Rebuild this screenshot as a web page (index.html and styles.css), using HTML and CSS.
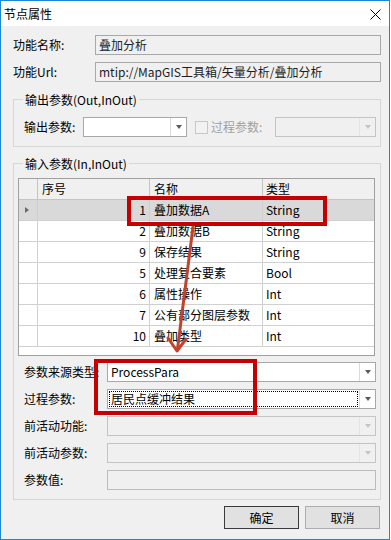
FILE: index.html
```html
<!DOCTYPE html>
<html lang="zh-CN">
<head>
<meta charset="utf-8">
<title>节点属性</title>
<link rel="stylesheet" href="styles.css">
</head>
<body>
<div class="window">
  <div class="titlebar">
    <span class="title">节点属性</span>
    <svg class="close" width="11" height="11" viewBox="0 0 11 11"><path d="M0.5 0.5 L10.5 10.5 M10.5 0.5 L0.5 10.5" stroke="#000" stroke-width="1" fill="none"/></svg>
  </div>
  <div class="content">
    <div class="info">
      <div class="lbl">功能名称:</div>
      <div class="textbox">叠加分析</div>
      <div class="lbl">功能Url:</div>
      <div class="textbox">mtip://MapGIS工具箱/矢量分析/叠加分析</div>
    </div>

    <div class="group g1">
      <div class="group-head"><span>输出参数(Out,InOut)</span></div>
      <div class="group-body">
        <div class="out-row">
          <div class="lbl out-lbl">输出参数:</div>
          <div class="combo small"><div class="val"></div><div class="dd"><i class="tri"></i></div></div>
          <div class="check"></div>
          <div class="lbl dis-lbl">过程参数:</div>
          <div class="combo small2 disabled"><div class="val"></div><div class="dd"><i class="tri"></i></div></div>
        </div>
      </div>
    </div>

    <div class="group g2">
      <div class="group-head"><span>输入参数(In,InOut)</span></div>
      <div class="group-body">
        <div class="grid">
          <div class="row head"><div></div><div class="c-l">序号</div><div class="c-l">名称</div><div class="c-l">类型</div></div>
          <div class="row sel"><div class="rh"><i class="cur"></i></div><div class="num">1</div><div class="c-l">叠加数据A</div><div class="c-l">String</div></div>
          <div class="row"><div class="rh"></div><div class="num">2</div><div class="c-l">叠加数据B</div><div class="c-l">String</div></div>
          <div class="row"><div class="rh"></div><div class="num">9</div><div class="c-l">保存结果</div><div class="c-l">String</div></div>
          <div class="row"><div class="rh"></div><div class="num">5</div><div class="c-l">处理复合要素</div><div class="c-l">Bool</div></div>
          <div class="row"><div class="rh"></div><div class="num">6</div><div class="c-l">属性操作</div><div class="c-l">Int</div></div>
          <div class="row"><div class="rh"></div><div class="num">7</div><div class="c-l">公有部分图层参数</div><div class="c-l">Int</div></div>
          <div class="row"><div class="rh"></div><div class="num">10</div><div class="c-l">叠加类型</div><div class="c-l">Int</div></div>
        </div>
        <div class="params">
          <div class="prow"><div class="lbl plbl">参数来源类型:</div><div class="combo"><div class="val">ProcessPara</div><div class="dd"><i class="tri"></i></div></div></div>
          <div class="prow"><div class="lbl plbl">过程参数:</div><div class="combo"><div class="val focus"><span>居民点缓冲结果</span></div><div class="dd"><i class="tri"></i></div></div></div>
          <div class="prow"><div class="lbl plbl">前活动功能:</div><div class="combo disabled"><div class="val"></div><div class="dd"><i class="tri"></i></div></div></div>
          <div class="prow"><div class="lbl plbl">前活动参数:</div><div class="combo disabled"><div class="val"></div><div class="dd"><i class="tri"></i></div></div></div>
          <div class="prow"><div class="lbl plbl">参数值:</div><div class="textbox dis-box"></div></div>
        </div>
      </div>
    </div>

    <div class="buttons">
      <div class="btn default">确定</div>
      <div class="btn">取消</div>
    </div>
  </div>

  <div class="mark mark1"></div>
  <div class="mark mark2"></div>
  <svg class="arrow" width="390" height="540" viewBox="0 0 390 540">
    <path d="M193 227 L177.5 349" stroke="#c0432f" stroke-width="3" fill="none" stroke-linecap="round"/>
    <path d="M168 338 L177 351 L186 339" stroke="#c0432f" stroke-width="3" fill="none" stroke-linecap="round" stroke-linejoin="round"/>
  </svg>
</div>
</body>
</html>
```

FILE: styles.css
```css
* { box-sizing: border-box; }
html, body { margin: 0; padding: 0; background: #fff; }
body {
  font-family: "Noto Sans CJK SC", "Microsoft YaHei", sans-serif;
  font-size: 12px;
  color: #000;
}
.window {
  position: relative;
  width: 390px;
  height: 540px;
  border: 1px solid #1c86d8;
  background: #f0f0f0;
}
.titlebar {
  height: 25px;
  background: #fff;
  display: flex;
  align-items: center;
  justify-content: space-between;
  padding: 0 8px 0 3px;
}
.title { line-height: 16px; }
.close { display: block; margin-top: 2px; }

.content { padding: 9px 8px 0 12px; }

.info {
  display: grid;
  grid-template-columns: 82px 1fr;
  grid-auto-rows: 20px;
  row-gap: 7px;
}
.lbl {
  display: flex;
  align-items: center;
  line-height: 16px;
  white-space: nowrap;
}
.textbox {
  border: 1px solid #a8a8a8;
  background: #f0f0f0;
  display: flex;
  align-items: center;
  padding-left: 3px;
  line-height: 16px;
  color: #1e1e1e;
  white-space: nowrap;
}

.group-head { display: flex; height: 16px; line-height: 16px; }
.group-head::before {
  content: "";
  width: 9px;
  height: 8px;
  align-self: flex-end;
  border-left: 1px solid #d6d6d6;
  border-top: 1px solid #d6d6d6;
}
.group-head::after {
  content: "";
  flex: 1;
  height: 8px;
  align-self: flex-end;
  border-right: 1px solid #d6d6d6;
  border-top: 1px solid #d6d6d6;
}
.group-head span { padding: 0 2px; }
.group-body { border: 1px solid #d6d6d6; border-top: none; }

.g1 { margin-top: 10px; }
.g1 .group-body { padding: 9px 0 9px 10px; }
.out-row { display: flex; align-items: center; height: 20px; }
.out-lbl { width: 59px; }
.combo {
  display: flex;
  height: 20px;
  border: 1px solid #a8a8a8;
  background: #fff;
  flex: 1;
}
.combo.small { flex: none; width: 104px; }
.combo.small2 { flex: none; width: 101px; }
.combo .val {
  flex: 1;
  display: flex;
  align-items: center;
  padding-left: 3px;
  line-height: 16px;
  white-space: nowrap;
}
.combo .dd {
  width: 16px;
  border-left: 1px solid #dadada;
  display: flex;
  align-items: center;
  justify-content: center;
}
.tri {
  display: block;
  width: 0;
  height: 0;
  border-left: 3.5px solid transparent;
  border-right: 3.5px solid transparent;
  border-top: 4px solid #5a5a5a;
  margin-left: 1px;
}
.combo.disabled { background: #f0f0f0; border-color: #c4c4c4; }
.combo.disabled .dd { border-left-color: #e4e4e4; }
.combo.disabled .tri { border-top-color: #c4c4c4; }
.check {
  width: 13px;
  height: 13px;
  margin-left: 8px;
  border: 1px solid #c8c8c8;
  background: #f2f2f2;
}
.dis-lbl { width: 64px; margin-left: 3px; color: #a0a0a0; }

.g2 { margin-top: 9px; }
.g2 .group-body { padding: 6px 4px 9px 4px; }
.grid {
  width: 357px;
  height: 178px;
  border: 1px solid #a0a0a0;
  background: #fff;
}
.row {
  display: grid;
  grid-template-columns: 19px 112px 113px 111px;
  height: 21px;
}
.row > div {
  border-right: 1px solid #d0d0d0;
  border-bottom: 1px solid #d0d0d0;
  display: flex;
  align-items: center;
  line-height: 16px;
  white-space: nowrap;
  overflow: hidden;
}
.row > div:last-child { border-right: none; }
.row.head > div { background: #f0f0f0; border-color: #c4c4c4; }
.row.sel > div { background: #d9d9d9; }
.c-l { padding-left: 4px; }
.head .c-l:last-child, .row .c-l:last-child { padding-left: 3px; }
.num { justify-content: flex-end; padding-right: 3px; }
.rh { justify-content: center; }
.cur {
  display: block;
  width: 0;
  height: 0;
  border-top: 3.5px solid transparent;
  border-bottom: 3.5px solid transparent;
  border-left: 4px solid #6a6a6a;
  margin-right: 3px;
}

.params {
  margin-top: 6px;
  padding-left: 6px;
  display: flex;
  flex-direction: column;
  gap: 7px;
}
.prow { display: flex; align-items: center; height: 20px; }
.plbl { width: 83px; }
.prow .textbox { flex: 1; height: 20px; }
.dis-box { border-color: #bcbcbc; }
.combo .val.focus { padding: 0; margin: 1px 1px 1px 1px; }
.focus span {
  flex: 1;
  align-self: stretch;
  display: flex;
  align-items: center;
  border: 1px dotted #000;
  padding-left: 1px;
}

.buttons {
  display: flex;
  justify-content: flex-end;
  gap: 6px;
  margin-top: 6px;
  padding-right: 1px;
}
.btn {
  width: 75px;
  height: 23px;
  border: 1px solid #adadad;
  background: #e1e1e1;
  display: flex;
  align-items: center;
  justify-content: center;
  line-height: 16px;
}
.btn.default { border-color: #3a3a3a; }

.mark {
  position: absolute;
  border: 4px solid #c40000;
  pointer-events: none;
}
.mark1 { left: 126px; top: 195px; width: 200px; height: 30px; }
.mark2 { left: 93px; top: 358px; width: 163px; height: 56px; }
.arrow {
  position: absolute;
  left: -1px;
  top: -1px;
  pointer-events: none;
}
```
